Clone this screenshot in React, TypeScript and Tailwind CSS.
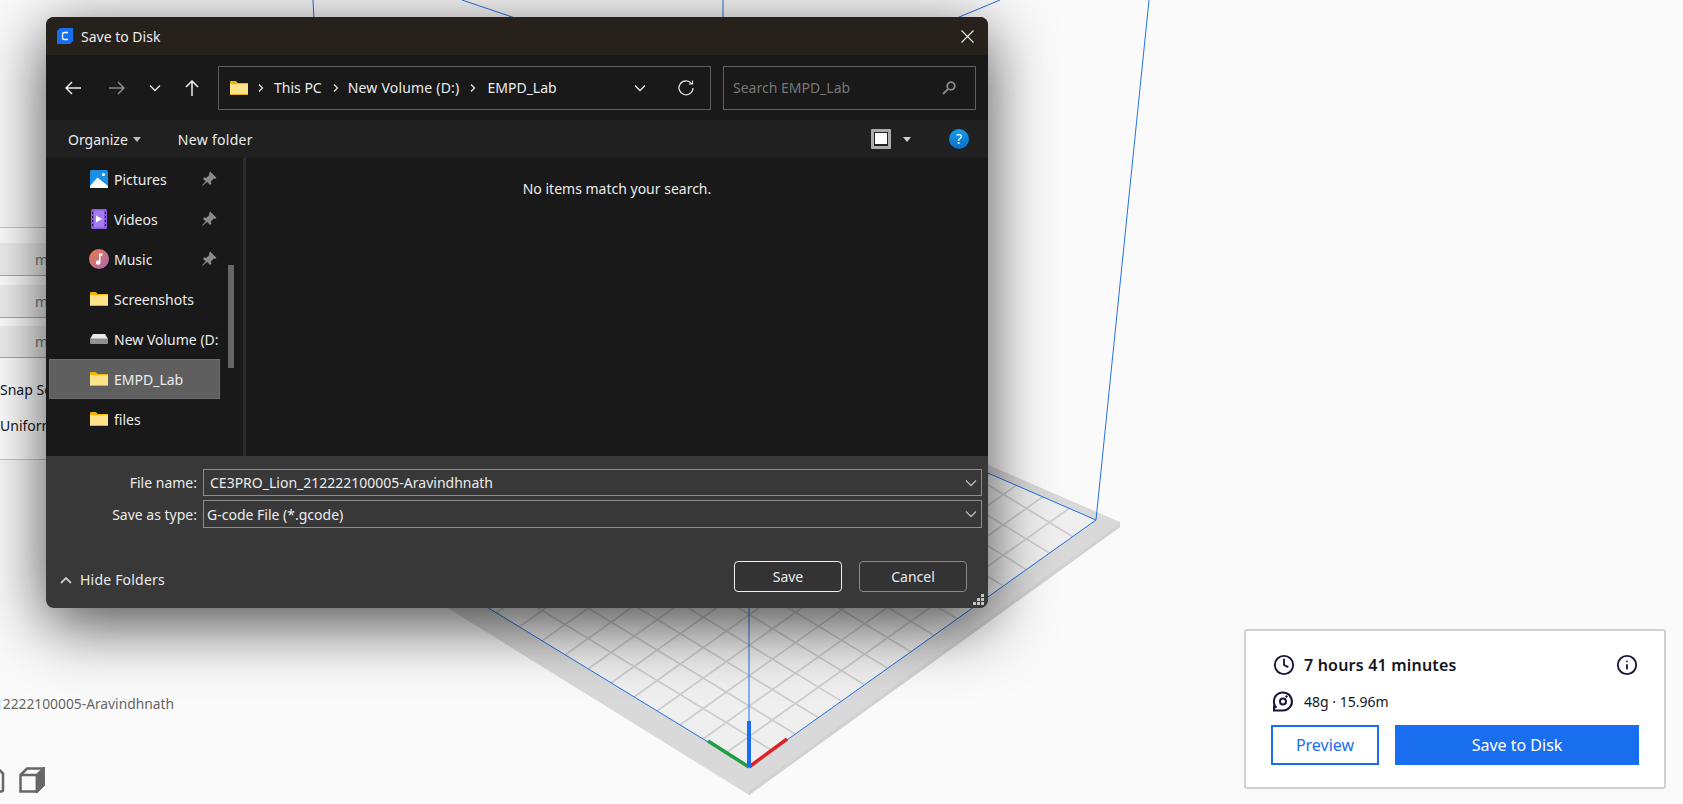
import React from 'react';
import { Clock, Info } from 'lucide-react';

const Chevron = ({ color = '#e8e8e8', size = 12 }: { color?: string; size?: number }) => (
  <svg width={size} height={size} viewBox="0 0 12 12" fill="none" stroke={color} strokeWidth="1.3">
    <path d="M1 3.5 6 8.5 11 3.5" />
  </svg>
);

const Crumb = () => (
  <svg width="6" height="10" viewBox="0 0 6 10" fill="none" stroke="#e0e0e0" strokeWidth="1.3">
    <path d="M1 1.5 4.5 5 1 8.5" />
  </svg>
);

const Caret = ({ color = '#bdbdbd' }: { color?: string }) => (
  <svg width="8" height="5" viewBox="0 0 8 5">
    <path d="M0 0h8L4 5z" fill={color} />
  </svg>
);

const Folder = () => (
  <svg width="18" height="14" viewBox="0 0 18 14">
    <path d="M0 1.2C0 .5.5 0 1.2 0h4.6l2 2H18v2H0z" fill="#f4b400" />
    <path d="M0 3h18v10c0 .6-.4 1-1 1H1c-.6 0-1-.4-1-1z" fill="#ffd966" />
    <path d="M0 3.600h18V13H0z" fill="#ffe38a" />
    <path d="M0 13h18v1H0z" fill="#e8ab1e" />
  </svg>
);

const PicturesIcon = () => (
  <svg width="18" height="18" viewBox="0 0 18 18">
    <rect width="18" height="18" rx="1.500" fill="#1a8fe3" />
    <path d="M0 16 7.500 7.500 18 16v1c0 .6-.4 1-1 1H1c-.6 0-1-.4-1-1z" fill="#fff" />
    <circle cx="13.500" cy="4.500" r="1.500" fill="#fff" />
  </svg>
);

const VideosIcon = () => (
  <svg width="16" height="20" viewBox="0 0 16 20">
    <rect width="16" height="20" rx="1.500" fill="#8a5ae0" />
    <rect x="3" y="1.500" width="10" height="17" fill="#a47cf0" />
    <path d="M5 6.500v7l6-3.500z" fill="#fff" />
    <path d="M1 3h1.200v2H1zM1 7h1.200v2H1zM1 11h1.200v2H1zM1 15h1.200v2H1zM13.800 3H15v2h-1.200zM13.800 7H15v2h-1.200zM13.800 11H15v2h-1.200zM13.800 15H15v2h-1.200z" fill="#2d1a55" />
  </svg>
);

const MusicIcon = () => (
  <svg width="20" height="20" viewBox="0 0 20 20">
    <defs>
      <linearGradient id="music" x1="0" y1="0" x2="1" y2="1">
        <stop offset="0" stopColor="#ec7b45" />
        <stop offset="1" stopColor="#a868b8" />
      </linearGradient>
    </defs>
    <circle cx="10" cy="10" r="10" fill="url(#music)" />
    <path d="M10 4.500h3.500v2H11.500v7a2.300 2.300 0 1 1-1.500-2.100z" fill="#fff" />
  </svg>
);

const DriveIcon = () => (
  <svg width="18" height="10" viewBox="0 0 18 10">
    <path d="M3 0h12l3 5H0z" fill="#e8e8e8" />
    <rect y="4.500" width="18" height="5.500" rx="1" fill="#8f8f8f" />
    <rect x="3" y="6.500" width="1.500" height="1.200" fill="#5ce05c" />
  </svg>
);

const PinIcon = () => (
  <svg width="16" height="16" viewBox="0 0 14 14" fill="#8b8b8b">
    <path d="M8 .5 13.500 6l-1.300 1-1-.4-2.400 2.400.2 2.200-1 1-2.500-2.500L1.200 13l-.4-.4 3.300-3.400L1.700 6.700l1-1 2.200.2 2.400-2.400-.4-1z" />
  </svg>
);

const SpoolIcon = () => (
  <svg width="22" height="22" viewBox="0 0 22 22" fill="none" stroke="#14143c" strokeWidth="2">
    <path d="M4.500 17.800A9 9 0 1 1 11 20.500H2V15.500" />
    <circle cx="11" cy="11.500" r="3" />
    <circle cx="14.500" cy="6.500" r="0.800" fill="#14143c" strokeWidth="1" />
  </svg>
);

const places = [
  { name: 'Pictures', icon: <PicturesIcon />, pin: true },
  { name: 'Videos', icon: <VideosIcon />, pin: true },
  { name: 'Music', icon: <MusicIcon />, pin: true },
  { name: 'Screenshots', icon: <Folder /> },
  { name: 'New Volume (D:)', icon: <DriveIcon /> },
  { name: 'EMPD_Lab', icon: <Folder />, active: true },
  { name: 'files', icon: <Folder /> },
];

// print bed, drawn by hand; perspective is ignored, the cells are close enough
const Scene = () => {
  const tip = [749, 767];
  const u = [23.1, -16.47];
  const v = [-23, -14];
  const lines = [];
  for (let i = 1; i < 32; i++) {
    lines.push(
      <line key={`a${i}`} x1={tip[0] + u[0] * i} y1={tip[1] + u[1] * i} x2={tip[0] + u[0] * i + v[0] * 32} y2={tip[1] + u[1] * i + v[1] * 32} />,
      <line key={`b${i}`} x1={tip[0] + v[0] * i} y1={tip[1] + v[1] * i} x2={tip[0] + v[0] * i + u[0] * 32} y2={tip[1] + v[1] * i + u[1] * 32} />,
    );
  }
  return (
    <svg className="absolute inset-0" width="1683" height="804" viewBox="0 0 1683 804" fill="none">
      <defs>
        <clipPath id="bed">
          <path d="M749 767 1096 520 700 348 300 493z" />
        </clipPath>
      </defs>
      <path d="M749 795 1120 527 1120 522 700 340 200 452 451 610z" fill="#d9d9d9" />
      <path d="M749 795 1120 527 1120 523 749 791z" fill="#d2d2d2" />
      <path d="M749 767 1096 520 700 348 300 493z" fill="#efefef" />
      <g clipPath="url(#bed)" stroke="#cdcdcd" strokeWidth="1.700">
        {lines}
      </g>
      <g stroke="#2272e8" strokeWidth="1">
        <path d="M749 767 1096 520 1149 0M749 767 300 493M749 767V600M313 0 314 20M462 0 521 20M723 0V20M952 20 1000 0M1096 520 700 348" />
      </g>
      <path d="M749 767 708 741" stroke="#1f9e45" strokeWidth="3.500" />
      <path d="M749 767 787 739" stroke="#dc2028" strokeWidth="3.500" />
      <path d="M749 767V721" stroke="#196ef0" strokeWidth="4" />
    </svg>
  );
};

const Dialog = () => (
  <div className="absolute left-[46px] top-[17px] flex h-[591px] w-[942px] flex-col overflow-hidden rounded-[8px] bg-[#383838] text-[14px] text-[#ececec] shadow-[0_16px_64px_rgba(0,0,0,0.7)]">
    <div className="flex h-[38px] shrink-0 items-center bg-[#27211c] pl-[11px] pr-[14px]">
      <svg width="16" height="16" viewBox="0 0 16 16">
        <path d="M3 0h13v13l-3 3H0V3z" fill="#1a6ff0" />
        <path d="M11 4.500H7.500a2 2 0 0 0-2 2v3a2 2 0 0 0 2 2H11" fill="none" stroke="#fff" strokeWidth="1.300" />
      </svg>
      <span className="ml-[8px]">Save to Disk</span>
      <svg className="ml-auto" width="13" height="13" viewBox="0 0 13 13" stroke="#e8e8e8" strokeWidth="1.100">
        <path d="M.5.500l12 12M12.500.500l-12 12" />
      </svg>
    </div>

    <div className="flex h-[65px] shrink-0 items-center bg-[#191919] pl-[5px] pr-[12px]">
      <div className="flex w-[44px] justify-center">
        <svg width="16" height="14" viewBox="0 0 16 14" fill="none" stroke="#eeeeee" strokeWidth="1.500">
          <path d="M16 7H1M7 1 1 7l6 6" />
        </svg>
      </div>
      <div className="flex w-[44px] justify-center">
        <svg width="16" height="14" viewBox="0 0 16 14" fill="none" stroke="#888888" strokeWidth="1.500">
          <path d="M0 7h15M9 1l6 6-6 6" />
        </svg>
      </div>
      <div className="flex w-[32px] justify-center">
        <Chevron />
      </div>
      <div className="flex w-[42px] justify-center">
        <svg width="14" height="16" viewBox="0 0 14 16" fill="none" stroke="#eeeeee" strokeWidth="1.500">
          <path d="M7 16V1M1 7l6-6 6 6" />
        </svg>
      </div>
      <div className="ml-[5px] flex h-[44px] w-[493px] items-center border border-[#5e5e5e] pl-[11px] pr-[16px]">
        <Folder />
        <span className="ml-[10px] flex items-center"><Crumb /></span>
        <span className="ml-[10px]">This PC</span>
        <span className="ml-[11px] flex items-center"><Crumb /></span>
        <span className="ml-[9px] tracking-[0.2px]">New Volume (D:)</span>
        <span className="ml-[11px] flex items-center"><Crumb /></span>
        <span className="ml-[11px]">EMPD_Lab</span>
        <span className="ml-auto"><Chevron /></span>
        <svg className="ml-[32px]" width="16" height="16" viewBox="0 0 16 16" fill="none" stroke="#e8e8e8" strokeWidth="1.200">
          <path d="M13.500 3.500A7 7 0 1 0 15 8M14.500 .5v3.500H11" />
        </svg>
      </div>
      <div className="ml-[12px] flex h-[44px] w-[253px] items-center border border-[#5e5e5e] pl-[9px] pr-[19px] text-[#777777]">
        <span>Search EMPD_Lab</span>
        <svg className="ml-auto" width="14" height="14" viewBox="0 0 14 14" fill="none" stroke="#8a8a8a" strokeWidth="1.800">
          <circle cx="9" cy="5" r="3.800" />
          <path d="M6 8 1 13" />
        </svg>
      </div>
    </div>

    <div className="flex h-[38px] shrink-0 items-center bg-[#202020] pl-[22px] pr-[19px]">
      <span>Organize</span>
      <span className="ml-[5px] flex items-center"><Caret /></span>
      <span className="ml-[37px] tracking-[0.3px]">New folder</span>
      <span className="ml-auto flex h-[20px] w-[20px] items-center justify-center rounded-[1px] bg-[#ababab]">
        <span className="block h-[14px] w-[14px] border border-b-2 border-[#222222] bg-white" />
      </span>
      <span className="ml-[12px] flex items-center"><Caret color="#d0d0d0" /></span>
      <span className="ml-[38px] flex h-[20px] w-[20px] items-center justify-center rounded-full bg-linear-to-b from-[#1a9bea] to-[#0a6fc8] text-[14px] leading-none text-white">?</span>
    </div>

    <div className="flex h-[298px] shrink-0 bg-[#191919]">
      <div className="relative w-[197px] shrink-0 overflow-hidden pl-[3px] pt-[1px]">
        {places.map((p) => (
          <div
            key={p.name}
            className={`flex h-[40px] w-[171px] items-center border ${p.active ? 'border-[#6c6c6c] bg-[#5f5f5f]' : 'border-transparent'}`}
          >
            <div className="ml-[37px] flex w-[24px] shrink-0 justify-center">{p.icon}</div>
            <span className="ml-[3px] overflow-hidden whitespace-nowrap">{p.name}</span>
            {p.pin && <span className="ml-auto mr-[2px] flex"><PinIcon /></span>}
          </div>
        ))}
        <div className="absolute left-[182px] top-[107px] h-[103px] w-[6px] bg-[#666666]" />
      </div>
      <div className="w-[3px] shrink-0 bg-[#2b2b2b]" />
      <div className="flex-1 pt-[21px] text-center leading-[20px]">
        <span>No items match your search.</span>
      </div>
    </div>

    <div className="relative flex flex-1 flex-col pt-[13px]">
      <div className="flex items-center">
        <span className="w-[151px] text-right">File name:</span>
        <div className="ml-[6px] mr-[6px] flex h-[27px] flex-1 items-center border border-[#8c8c8c] pl-[6px] pr-[4px]">
          <span>CE3PRO_Lion_212222100005-Aravindhnath</span>
          <span className="ml-auto"><Chevron color="#b8b8b8" /></span>
        </div>
      </div>
      <div className="mt-[4px] flex items-center">
        <span className="w-[151px] text-right">Save as type:</span>
        <div className="ml-[6px] mr-[6px] flex h-[28px] flex-1 items-center border border-[#8c8c8c] pl-[3px] pr-[4px]">
          <span>G-code File (*.gcode)</span>
          <span className="ml-auto"><Chevron color="#b8b8b8" /></span>
        </div>
      </div>
      <div className="mt-[33px] flex items-center pl-[14px] pr-[21px]">
        <div className="flex items-center pt-[6px]">
          <svg width="12" height="8" viewBox="0 0 12 8" fill="none" stroke="#c8c8c8" strokeWidth="1.800">
            <path d="M1 7 6 2l5 5" />
          </svg>
          <span className="ml-[8px] tracking-[0.2px]">Hide Folders</span>
        </div>
        <button className="ml-auto h-[31px] w-[108px] rounded-[4px] border border-[#f0f0f0] bg-[#333333]">Save</button>
        <button className="ml-[17px] h-[31px] w-[108px] rounded-[4px] border border-[#8a8a8a] bg-[#333333]">Cancel</button>
      </div>
      <svg className="absolute bottom-[2px] right-[3px]" width="12" height="12" viewBox="0 0 12 12" fill="#c4c4c4">
        <path d="M8 0h3v3H8zM4 4h3v3H4zM8 4h3v3H8zM0 8h3v3H0zM4 8h3v3H4zM8 8h3v3H8z" />
      </svg>
    </div>
  </div>
);

const SummaryCard = () => (
  <div className="absolute left-[1244px] top-[629px] flex h-[160px] w-[422px] flex-col rounded-[3px] border-2 border-[#d0d0d0] bg-white pl-[25px] pr-[25px] pt-[21px] text-[#14141e]">
    <div className="flex h-[26px] items-center">
      <Clock size={22} color="#14143c" strokeWidth={2} className="ml-[2px]" />
      <span className="ml-[9px] text-[16px] font-semibold tracking-[0.2px]">7 hours 41 minutes</span>
      <Info size={22} color="#14143c" strokeWidth={2} className="ml-auto mr-[1px]" />
    </div>
    <div className="mt-[12px] flex h-[22px] items-center">
      <span className="ml-[1px] flex"><SpoolIcon /></span>
      <span className="ml-[10px] text-[14px]">48g · 15.96m</span>
    </div>
    <div className="mt-[13px] flex gap-[16px] text-[16px]">
      <button className="h-[40px] w-[108px] border-2 border-[#196ef0] bg-white text-[#196ef0]">Preview</button>
      <button className="h-[40px] w-[244px] bg-[#196ef0] text-white">Save to Disk</button>
    </div>
  </div>
);

export default function App() {
  return (
    <div className="relative h-[804px] w-[1683px] overflow-hidden bg-[#fafafa] font-['Noto_Sans',sans-serif]">
      <Scene />

      <div className="absolute left-0 top-[227px] flex h-[233px] w-[100px] flex-col border-y border-[#c8c8c8] bg-white text-[14px] text-[#14141e]">
        <div className="mt-[15px] flex h-[33px] items-center border-b border-[#aaaaaa] bg-[#f0f0f0] pl-[35px] text-[#777777]">mm</div>
        <div className="mt-[9px] flex h-[33px] items-center border-b border-[#aaaaaa] bg-[#f0f0f0] pl-[35px] text-[#777777]">mm</div>
        <div className="mt-[8px] flex h-[32px] items-center border-b border-[#aaaaaa] bg-[#f0f0f0] pl-[35px] text-[#777777]">mm</div>
        <div className="mt-[21px] whitespace-nowrap">Snap Scaling</div>
        <div className="mt-[15px] whitespace-nowrap">Uniform Scaling</div>
      </div>

      <div className="absolute right-[1509px] top-[694px] whitespace-nowrap text-[13.8px] text-[#666666]">212222100005-Aravindhnath</div>
      <svg className="absolute left-[19px] top-[767px]" width="26" height="26" viewBox="0 0 26 26" fill="none" stroke="#666666" strokeWidth="2.500">
        <path d="M1.500 8 8 1.500h16.500V18L18 24.500H1.500z" />
        <path d="M1.500 8H18v16.500" />
        <path d="M18 8l6.500-6.500V18L18 24.500z" fill="#666666" />
      </svg>
      <svg className="absolute left-0 top-[767px]" width="5" height="26" viewBox="0 0 5 26" fill="none" stroke="#666666" strokeWidth="2.500">
        <path d="M-6 1.500h4l5 5v16a2 2 0 0 1-2 2h-7" />
      </svg>

      <SummaryCard />
      <Dialog />
    </div>
  );
}
